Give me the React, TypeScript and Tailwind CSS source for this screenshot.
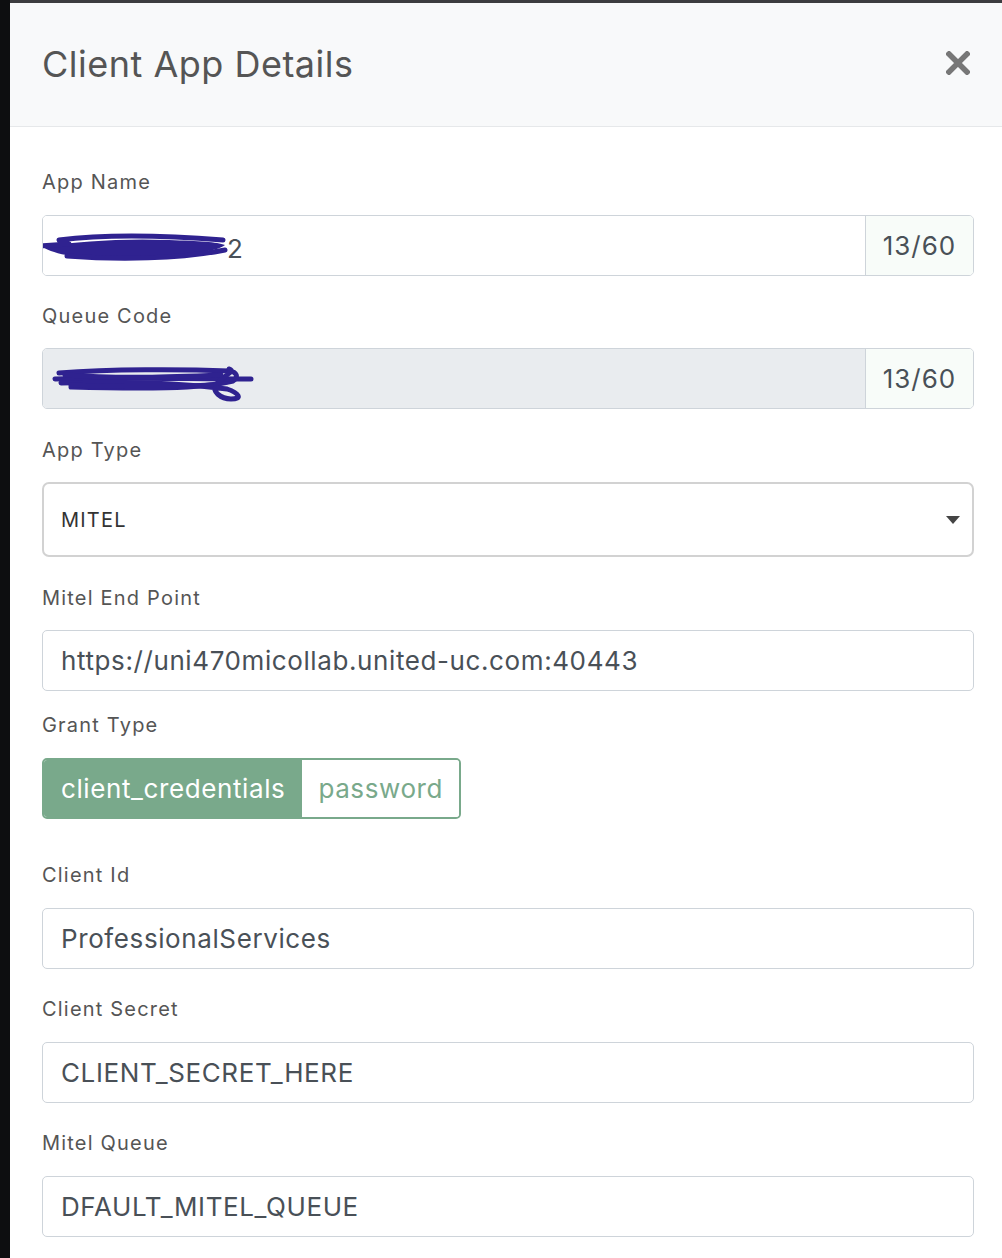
const font = { fontFamily: "Inter, 'Noto Sans', sans-serif" };

function Label({ children, className = "" }: { children: React.ReactNode; className?: string }) {
  return <div className={`text-[20px] leading-[30px] tracking-[1.2px] text-[#555] ${className}`}>{children}</div>;
}

function Scribble({ variant }: { variant: 1 | 2 }) {
  if (variant === 1) {
    return (
      <>
        <span className="absolute left-[184px] top-[13px] text-[26px] text-[#495057]">2</span>
        <svg className="absolute left-[-4px] top-[16px]" width="200" height="32" viewBox="0 0 200 32" fill="none">
          <path d="M2 14 C40 10 80 6 130 8 C160 9 178 10 186 13 C176 22 120 25 60 26 C30 26 10 20 2 14 Z" fill="#2f2290" />
          <path d="M20 8 C60 3 120 3 184 8 M28 24 C80 28 140 27 186 18 M2 14 L30 12" stroke="#2f2290" strokeWidth="5" strokeLinecap="round" />
        </svg>
      </>
    );
  }
  return (
    <svg className="absolute left-[8px] top-[14px]" width="210" height="40" viewBox="0 0 210 40" fill="none" stroke="#2f2290" strokeWidth="5" strokeLinecap="round">
      <path d="M8 10 C60 6 130 6 178 8 C186 9 188 14 182 18 C150 26 90 26 20 24" />
      <path d="M4 16 C60 14 140 16 200 16" />
      <path d="M10 20 C70 18 130 20 176 26 C188 30 192 36 180 36 C170 36 160 28 165 22 C170 14 186 8 178 6" />
      <path d="M14 12 C70 16 120 14 170 12" />
      <path d="M20 22 C70 24 120 24 160 22" />
    </svg>
  );
}

function TextInput({ value, className = "" }: { value: string; className?: string }) {
  return (
    <div className={`h-[61px] border border-[#ced4da] rounded-[5px] bg-white flex items-center px-[18px] text-[26px] tracking-[0.6px] text-[#495057] ${className}`}>
      {value}
    </div>
  );
}

function CounterInput({ disabled, scribble }: { disabled?: boolean; scribble: 1 | 2 }) {
  return (
    <div className="h-[61px] flex border border-[#ced4da] rounded-[5px] overflow-hidden">
      <div className={`flex-1 relative ${disabled ? "bg-[#e9ecef]" : "bg-white"}`}>
        <Scribble variant={scribble} />
      </div>
      <div className="w-[108px] border-l border-[#ced4da] bg-[#f8fcf9] flex items-center justify-center text-[26px] tracking-[1px] text-[#495057]">
        13/60
      </div>
    </div>
  );
}

export default function App() {
  return (
    <div className="w-[1002px] h-[1258px] bg-[#0d0e10] flex overflow-hidden" style={font}>
      <div className="w-[10px] shrink-0" />
      <div className="flex-1 flex flex-col">
        <div className="h-[3px] bg-[#3c3c3f]" />
        <div className="h-[124px] bg-[#f8f9fa] border-b border-[#e6e8ea] flex items-center justify-between pl-[32px] pr-[30px]">
          <h1 className="text-[36px] text-[#555] tracking-[0.5px] pb-[2px]">Client App Details</h1>
          <svg width="24" height="24" viewBox="0 0 24 24" className="mb-[4px] mr-[2px]">
            <path d="M3 3 L21 21 M21 3 L3 21" stroke="#777" strokeWidth="5.5" strokeLinecap="square" />
          </svg>
        </div>
        <div className="flex-1 bg-white pl-[32px] pr-[28px] pt-[40px]">
          <Label>App Name</Label>
          <div className="mt-[18px]"><CounterInput scribble={1} /></div>

          <Label className="mt-[25px]">Queue Code</Label>
          <div className="mt-[17px]"><CounterInput disabled scribble={2} /></div>

          <Label className="mt-[26px]">App Type</Label>
          <div className="mt-[17px] h-[75px] border-2 border-[#d2d2d2] rounded-[7px] flex items-center justify-between pl-[17px] pr-[12px] text-[20px] text-[#333] tracking-[1.2px]">
            <span>MITEL</span>
            <svg width="14" height="8" viewBox="0 0 14 8"><path d="M0 0 H14 L7 8 Z" fill="#444" /></svg>
          </div>

          <Label className="mt-[26px]">Mitel End Point</Label>
          <TextInput className="mt-[17px]" value="https://uni470micollab.united-uc.com:40443" />

          <Label className="mt-[19px]">Grant Type</Label>
          <div className="mt-[18px] inline-flex h-[61px] rounded-[5px] border-2 border-[#79a98b] overflow-hidden text-[26px] tracking-[0.6px]">
            <div className="bg-[#79a98b] text-white flex items-center px-[17px]">client_credentials</div>
            <div className="bg-white text-[#79a98b] flex items-center px-[16px]">password</div>
          </div>

          <Label className="mt-[41px]">Client Id</Label>
          <TextInput className="mt-[18px]" value="ProfessionalServices" />

          <Label className="mt-[25px]">Client Secret</Label>
          <TextInput className="mt-[18px]" value="CLIENT_SECRET_HERE" />

          <Label className="mt-[25px]">Mitel Queue</Label>
          <TextInput className="mt-[18px]" value="DFAULT_MITEL_QUEUE" />
        </div>
      </div>
    </div>
  );
}
